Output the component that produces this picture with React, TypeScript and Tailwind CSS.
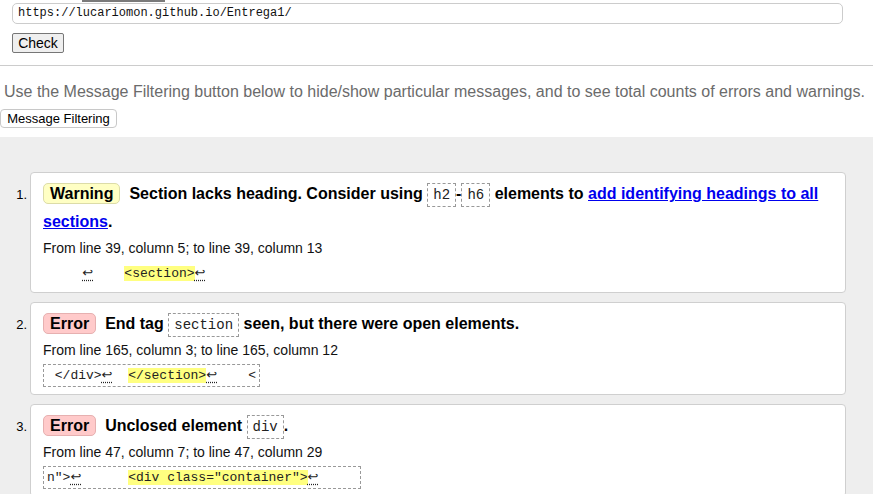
import React from "react";

const mono = { fontFamily: '"Liberation Mono", "DejaVu Sans Mono", monospace' };

function Arrow() {
  return (
    <span
      className="underline decoration-dotted underline-offset-[3px] text-[13px]"
      style={{ fontFamily: '"DejaVu Sans", sans-serif' }}
    >
      ↩
    </span>
  );
}

function Hl({ children }: { children: React.ReactNode }) {
  return <span className="bg-[#ffff80]">{children}</span>;
}

function Code({ children }: { children: React.ReactNode }) {
  return (
    <code
      className="inline-block border border-dashed border-[#999] px-[5px] py-[3px] text-[14px] leading-[16px] font-normal text-[#222]"
      style={mono}
    >
      {children}
    </code>
  );
}

function Badge({ kind }: { kind: "Warning" | "Error" }) {
  const cls =
    kind === "Warning"
      ? "bg-[#ffffc4] border-[#dcdca8]"
      : "bg-[#ffcaca] border-[#e6b0b0]";
  return (
    <span
      className={`inline-block border rounded-[5px] px-[6px] text-[16px] leading-[19px] font-bold mr-[9px] ${cls}`}
    >
      {kind}
    </span>
  );
}

function Item({
  n,
  kind,
  message,
  from,
  extract,
  bordered,
  pl,
}: {
  n: number;
  kind: "Warning" | "Error";
  message: React.ReactNode;
  from: string;
  extract: React.ReactNode;
  bordered: boolean;
  pl: string;
}) {
  return (
    <li className="flex">
      <div className="w-[30px] shrink-0 text-right pr-[3px] pt-[9px] text-[13px] leading-[28px]">
        {n}.
      </div>
      <div className="flex-1 mr-[27px] bg-white border border-[#cfcfcf] rounded-[4px] pl-[12px] pr-[12px] pt-[7px] pb-[7px]">
        <p className="text-[16px] leading-[28px] font-bold text-black">
          <Badge kind={kind} />
          {message}
        </p>
        <p className="mt-[2px] text-[14px] leading-[20px] text-[#111]">{from}</p>
        <div className="mt-[4px] flex">
          <code
            className={`block border border-dashed ${bordered ? "border-[#999]" : "border-transparent"} ${pl} pr-[3px] text-[13px] leading-[20px] whitespace-pre text-[#222]`}
            style={mono}
          >
            {extract}
          </code>
        </div>
      </div>
    </li>
  );
}

export default function App() {
  return (
    <div className="min-h-[494px] bg-[#eeeeee] text-black" style={{ fontFamily: '"Liberation Sans", Arial, sans-serif' }}>
      <div className="bg-white pb-[9px]">
        <div className="h-[3px]">
          <div className="ml-[82px] w-[83px] h-[2px] bg-[#7a7a7a]" />
        </div>
        <div className="px-[12px]">
          <div
            className="w-[831px] h-[21px] border border-[#cccccc] rounded-[5px] pl-[5px] text-[12px] leading-[19px] text-[#111]"
            style={mono}
          >
            https://lucariomon.github.io/Entrega1/
          </div>
          <button className="block mt-[9px] h-[20px] w-[52px] border border-[#767676] rounded-[2px] bg-[#efefef] text-[14px] leading-[18px] text-black">
            Check
          </button>
        </div>
        <div className="mt-[12px] h-px bg-[#cccccc]" />
        <p className="mt-[17px] pl-[4px] text-[16px] leading-[18px] text-[#6b6b6b] whitespace-nowrap">
          Use the Message Filtering button below to hide/show particular messages, and to see total counts of errors and warnings.
        </p>
        <button className="block mt-[8px] h-[19px] w-[117px] border border-[#c8c8c8] rounded-[4px] bg-white text-[13px] leading-[17px] text-black">
          Message Filtering
        </button>
      </div>
      <ol className="pt-[35px] flex flex-col gap-[9px]">
        <Item
          n={1}
          kind="Warning"
          message={
            <>
              Section lacks heading. Consider using <Code>h2</Code>-<Code>h6</Code> elements to{" "}
              <a href="#" className="text-[#0000ee] underline">
                add identifying headings to all sections
              </a>
              .
            </>
          }
          from="From line 39, column 5; to line 39, column 13"
          extract={
            <>
              {"    "}
              <Arrow />
              {"    "}
              <Hl>{"<section>"}</Hl>
              <Arrow />
            </>
          }
          bordered={false}
          pl="pl-[7px]"
        />
        <Item
          n={2}
          kind="Error"
          message={
            <>
              End tag <Code>section</Code> seen, but there were open elements.
            </>
          }
          from="From line 165, column 3; to line 165, column 12"
          extract={
            <>
              {" </div>"}
              <Arrow />
              {"  "}
              <Hl>{"</section>"}</Hl>
              <Arrow />
              {"    <"}
            </>
          }
          bordered={true}
          pl="pl-[3px]"
        />
        <Item
          n={3}
          kind="Error"
          message={
            <>
              Unclosed element <Code>div</Code>.
            </>
          }
          from="From line 47, column 7; to line 47, column 29"
          extract={
            <>
              {'n">'}
              <Arrow />
              {"      "}
              <Hl>{'<div class="container">'}</Hl>
              <Arrow />
              {"     "}
            </>
          }
          bordered={true}
          pl="pl-[3px]"
        />
      </ol>
    </div>
  );
}
